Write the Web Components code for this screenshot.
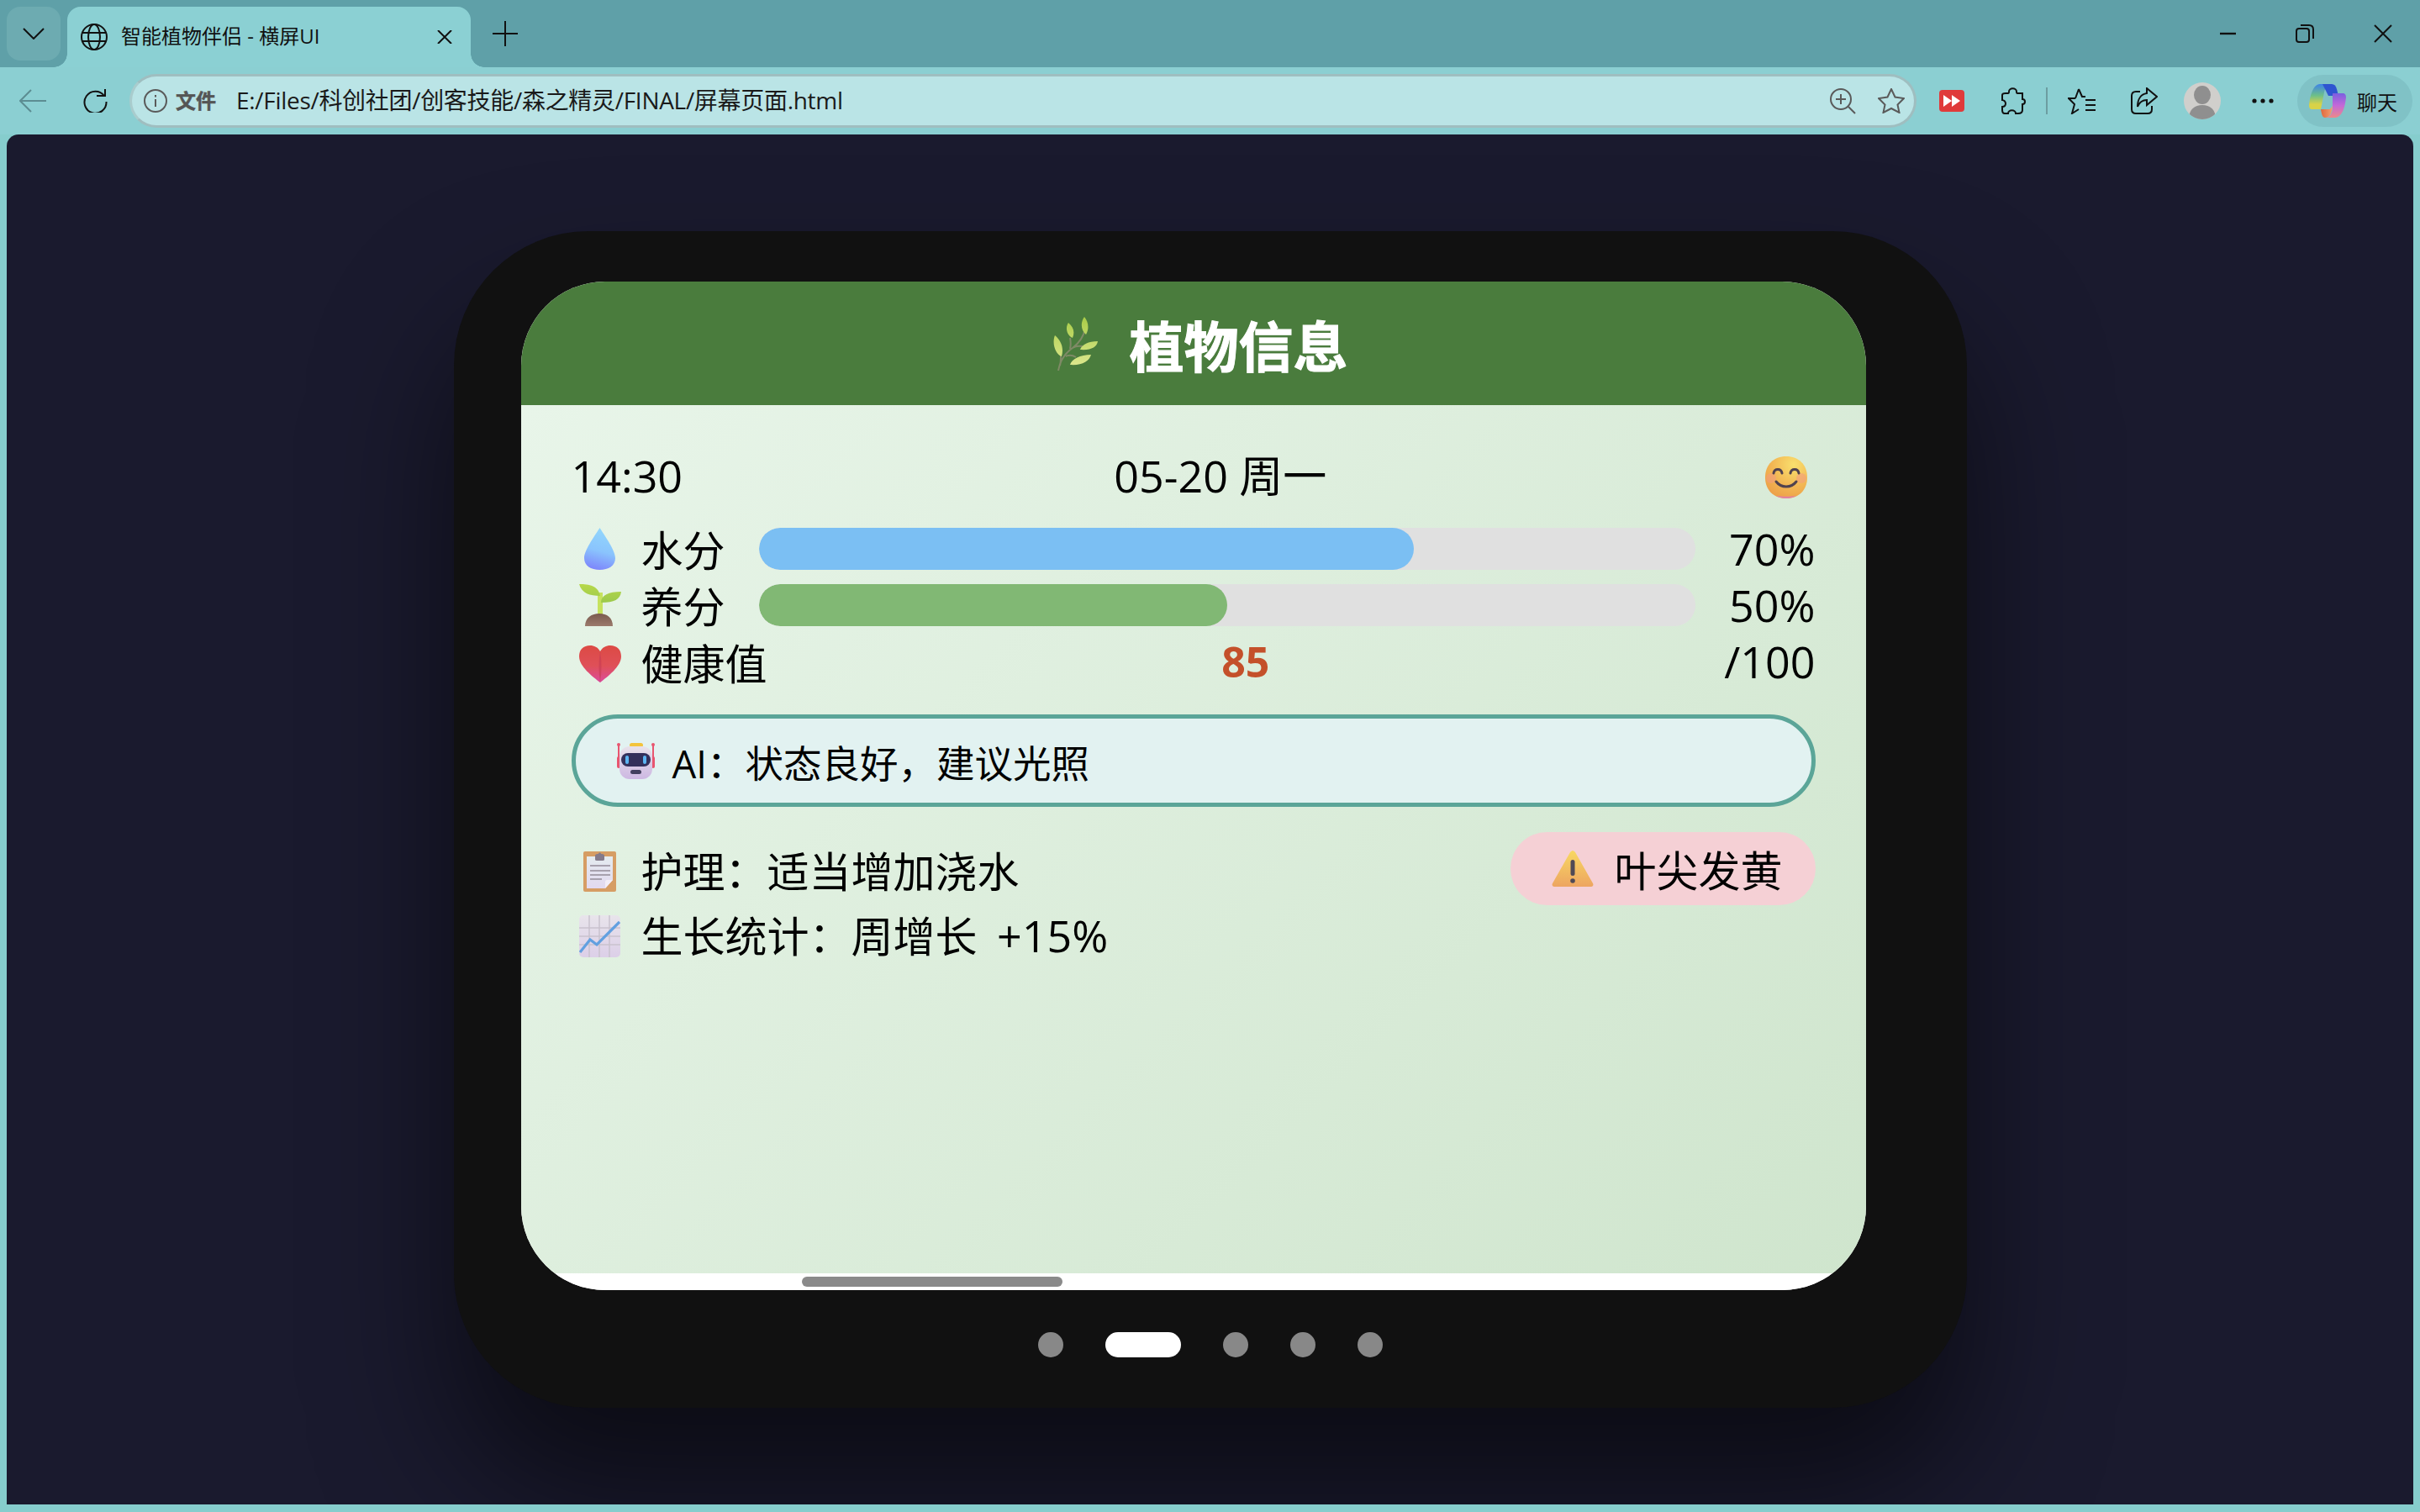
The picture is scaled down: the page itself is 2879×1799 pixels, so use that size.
<!DOCTYPE html>
<html lang="zh">
<head>
<meta charset="utf-8">
<title>智能植物伴侣 - 横屏UI</title>
<style>
  html, body { margin: 0; padding: 0; width: 2879px; height: 1799px; overflow: hidden; background: #86cdcd; }
  body { display: flex; flex-direction: column; font-family: "Open Sans", "Noto Sans CJK SC", sans-serif; }
</style>
</head>
<body>
<tab-strip></tab-strip>
<tool-bar></tool-bar>
<page-view>
  <device-frame>
    <plant-screen></plant-screen>
  </device-frame>
</page-view>

<script>
const ICONS = {
  herb: `<svg viewBox="0 0 54 64"><defs><linearGradient id="h" x1="0" y1="0" x2="0" y2="1"><stop offset="0" stop-color="#a9cc48"/><stop offset="1" stop-color="#dbe68c"/></linearGradient></defs>
    <path d="M7 64C9 52 14 44 24 37 32 31 37 24 39 14M24 37c3-2 6-3 12-2M16 47c4-2 7-2 12 1M21 38c1-4 1-8 0-13M9 58c1-4 1-8 1-13" fill="none" stroke="#7f8a66" stroke-width="2"/>
    <path d="M3 22C10 28 14 36 11 47 4 45-1 32 3 22zM19 7C25 12 27 18 24 25 17 22 15 13 19 7zM38 0C43 6 44 14 40 21 34 16 33 7 38 0zM54 29C53 36 46 40 33 39 35 33 43 29 54 29zM46 45C44 53 35 58 21 57 23 50 33 45 46 45z" fill="url(#h)"/></svg>`,
  smile: `<svg viewBox="0 0 50 50"><defs><radialGradient id="s" cx=".68" cy=".2" r=".95"><stop offset="0" stop-color="#f9e06e"/><stop offset=".55" stop-color="#f2b653"/><stop offset="1" stop-color="#eb9a45"/></radialGradient></defs>
    <path d="M25 0C40 0 50 10 50 25S40 50 25 50 0 40 0 25 10 0 25 0z" fill="url(#s)"/><path d="M13 47c7 4 17 4 24 0-7 1-17 1-24 0z" fill="#e27fa5"/>
    <circle cx="7" cy="26" r="6" fill="#f29a82" opacity=".55"/><circle cx="43" cy="26" r="6" fill="#f29a82" opacity=".55"/>
    <path d="M10 20c1-6 9-6 10 0M30 20c1-6 9-6 10 0M13 30c6 8 18 8 24 0" fill="none" stroke="#50424f" stroke-width="3" stroke-linecap="round"/></svg>`,
  drop: `<svg viewBox="0 0 37 50"><defs><linearGradient id="d" x1=".6" y1="0" x2=".4" y2="1"><stop offset="0" stop-color="#92d7fc"/><stop offset=".55" stop-color="#8ac4fd"/><stop offset="1" stop-color="#7d86fb"/></linearGradient></defs>
    <path d="M18.500 0C22 6 37 26 37 36 37 45 29 50 18.500 50S0 45 0 36C0 26 15 6 18.500 0z" fill="url(#d)"/></svg>`,
  sprout: `<svg viewBox="0 0 50 50"><defs><linearGradient id="sp" x1="0" y1="0" x2="0" y2="1"><stop offset="0" stop-color="#b7d84a"/><stop offset="1" stop-color="#9bc94c"/></linearGradient><linearGradient id="so" x1="0" y1="0" x2="0" y2="1"><stop offset="0" stop-color="#7a5a4e"/><stop offset="1" stop-color="#9b7a6c"/></linearGradient></defs>
    <path d="M22 10h6v27h-6z" fill="#c6e25e"/><path d="M0 0C12 0 23 2 25 14 13 14 3 11 0 0zM50 9C49 18 42 22 26 22 26 13 35 9 50 9z" fill="url(#sp)"/>
    <path d="M24 35c9 0 16 5 16 15H7c0-10 8-15 17-15z" fill="url(#so)"/></svg>`,
  heart: `<svg viewBox="0 0 50 44"><defs><linearGradient id="he" x1="0" y1="0" x2="0" y2="1"><stop offset="0" stop-color="#dc4a44"/><stop offset=".55" stop-color="#df5058"/><stop offset="1" stop-color="#dc4a9c"/></linearGradient></defs>
    <path d="M25 7C28 2 32 0 37 0 45 0 50 5 50 13 50 25 34 37 25 44 16 37 0 25 0 13 0 5 5 0 13 0 18 0 22 2 25 7z" fill="url(#he)"/><path d="M25 7c-2 12-2 24 0 37 2-13 2-25 0-37z" fill="#c73b52" opacity=".6"/></svg>`,
  robot: `<svg viewBox="0 0 45 44"><defs><linearGradient id="r" x1="0" y1="0" x2="0" y2="1"><stop offset="0" stop-color="#e8e2ea"/><stop offset="1" stop-color="#cdb8e2"/></linearGradient></defs>
    <rect x="15" y="1" width="16" height="5" rx="2.500" fill="#f3c43c"/><path d="M2 3v26M43 3v26" stroke="#e8556f" stroke-width="2"/><circle cx="2" cy="3" r="2" fill="#e8556f"/><circle cx="43" cy="3" r="2" fill="#e8556f"/>
    <rect x="0" y="17" width="4" height="14" rx="2" fill="#e8556f"/><rect x="41" y="17" width="4" height="14" rx="2" fill="#e8556f"/>
    <rect x="3" y="5" width="39" height="39" rx="12" fill="url(#r)"/><rect x="5" y="13" width="35" height="16" rx="8" fill="#33305a"/><rect x="10" y="16" width="4" height="10" rx="2" fill="#5cb5f2"/><rect x="31" y="16" width="4" height="10" rx="2" fill="#5cb5f2"/><rect x="16" y="33" width="13" height="5" rx="2.500" fill="#43405f"/></svg>`,
  clipboard: `<svg viewBox="0 0 39 49"><defs><linearGradient id="c" x1="0" y1="0" x2="0" y2="1"><stop offset="0" stop-color="#e4ebef"/><stop offset="1" stop-color="#e2d9f0"/></linearGradient></defs>
    <rect x="0" y="1" width="39" height="48" rx="2" fill="#d69d64"/><path d="M4 7h31v28l-9 10H4z" fill="url(#c)"/><path d="M26 45l9-10h-7c-1 0-2 1-2 2z" fill="#f3eef7"/>
    <path d="M14 6c0-1 1-2 3-2h1c0-2 3-2 3 0h1c2 0 3 1 3 2v4c0 1 0 2-2 2H16c-2 0-2-1-2-2z" fill="#847a8a"/><path d="M8 18h24M8 24h24M8 29h24M8 34h14" stroke="#a7a1ae" stroke-width="1.800"/></svg>`,
  chart: `<svg viewBox="0 0 49 50"><defs><linearGradient id="g" x1="0" y1="0" x2="0" y2="1"><stop offset="0" stop-color="#e8e4eb"/><stop offset="1" stop-color="#dccfe8"/></linearGradient></defs>
    <rect width="49" height="50" rx="5" fill="url(#g)"/><path d="M0 15h49M0 25h49M0 35h49M12 0v50M24 0v50M36 0v50" stroke="#c9c2ce" stroke-width="1.500"/>
    <path d="M1 44L13 29l8 6L48 8" fill="none" stroke="#62a0e0" stroke-width="3.200"/></svg>`,
  warn: `<svg viewBox="0 0 50 43"><defs><linearGradient id="w" x1="0" y1="0" x2="0" y2="1"><stop offset="0" stop-color="#f8d862"/><stop offset="1" stop-color="#eda561"/></linearGradient></defs>
    <path d="M25 0c1 0 2 1 3 2l21 37c1 2 0 4-2 4H3c-2 0-3-2-2-4L22 2c1-1 2-2 3-2z" fill="url(#w)"/><rect x="22.500" y="11" width="5" height="19" rx="2.500" fill="#4f4a55"/><circle cx="25" cy="36" r="2.800" fill="#4f4a55"/></svg>`
};

// one painted emoji, size comes from the attributes
class UiIcon extends HTMLElement {
  connectedCallback() {
    this.attachShadow({ mode: 'open' });
    const w = this.getAttribute('w') || 50, h = this.getAttribute('h') || 50;
    this.shadowRoot.innerHTML = `
      <style>
        :host { display: inline-flex; align-items: center; justify-content: center; flex: none; }
        svg { display: block; width: ${w}px; height: ${h}px; }
      </style>
      ${ICONS[this.getAttribute('name')]}
    `;
  }
}
customElements.define('ui-icon', UiIcon);

class TabStrip extends HTMLElement {
  connectedCallback() {
    this.attachShadow({ mode: 'open' });
    this.shadowRoot.innerHTML = `
      <style>
        :host { display: flex; height: 80px; background: #5fa0a8; color: #111; font-size: 24px; flex: none; }
        .list { width: 64px; height: 64px; margin: 8px 8px 0; border-radius: 16px; background: #6dabb1; display: flex; align-items: center; justify-content: center; }
        .tab { position: relative; width: 480px; height: 72px; margin-top: 8px; background: #8bd0d3; border-radius: 16px 16px 0 0; display: flex; align-items: center; padding: 0 22px 0 16px; box-sizing: border-box; }
        .tab::before, .tab::after { content: ''; position: absolute; bottom: 0; width: 16px; height: 16px; }
        .tab::before { left: -16px; background: radial-gradient(circle at 0 0, transparent 15.500px, #8bd0d3 16px); }
        .tab::after { right: -16px; background: radial-gradient(circle at 100% 0, transparent 15.500px, #8bd0d3 16px); }
        .title { margin-left: 16px; flex: 1; white-space: nowrap; position: relative; top: -3px; }
        .plus { margin-left: 26px; display: flex; align-items: center; }
        .controls { margin-left: auto; display: flex; align-items: center; }
        svg { display: block; fill: none; stroke: #111; stroke-width: 2; }
      </style>
      <div class="list"><svg width="26" height="14" viewBox="0 0 26 14"><path d="M1 1l12 12L25 1"/></svg></div>
      <div class="tab">
        <svg width="32" height="32" viewBox="0 0 32 32"><circle cx="16" cy="16" r="15"/><ellipse cx="16" cy="16" rx="7" ry="15"/><path d="M2 11h28M2 21h28"/></svg>
        <span class="title">智能植物伴侣 - 横屏UI</span>
        <svg width="18" height="16" viewBox="0 0 18 16"><path d="M1 0l16 16M17 0L1 16"/></svg>
      </div>
      <div class="plus"><svg width="30" height="30" viewBox="0 0 30 30"><path d="M15 0v30M0 15h30"/></svg></div>
      <div class="controls">
        <svg width="20" height="20" viewBox="0 0 20 20"><path d="M0 10h19" stroke-width="2.400"/></svg>
        <svg style="margin-left:70px" width="22" height="22" viewBox="0 0 22 22"><rect x="1" y="5" width="15" height="16" rx="3"/><path d="M6 1h10c3 0 5 2 5 5v11"/></svg>
        <svg style="margin-left:71px;margin-right:33px" width="22" height="22" viewBox="0 0 22 22"><path d="M1 1l20 20M21 1L1 21"/></svg>
      </div>
    `;
  }
}
customElements.define('tab-strip', TabStrip);

class ToolBar extends HTMLElement {
  connectedCallback() {
    this.attachShadow({ mode: 'open' });
    this.shadowRoot.innerHTML = `
      <style>
        :host { display: flex; align-items: center; height: 80px; background: #8bcfd2; flex: none; color: #111; font-size: 24px; }
        svg { display: block; fill: none; stroke: #111; stroke-width: 2; flex: none; }
        .nav { display: flex; align-items: center; width: 154px; padding-left: 23px; box-sizing: border-box; gap: 42px; }
        .addr { width: 2126px; height: 64px; box-sizing: border-box; border: 3px solid #9fbec0; border-left-color: #a9cccd; border-radius: 32px; background: #bae4e6; display: flex; align-items: center; padding-left: 14px; }
        .scheme { margin-left: 10px; font-weight: 700; color: #555; font-size: 24px; width: 72px; -webkit-text-stroke: .5px #555; position: relative; top: -2px; }
        .url { font-size: 28px; white-space: nowrap; color: #1a1a1a; position: relative; top: -2px; letter-spacing: -0.3px; }
        .right { display: flex; align-items: center; margin-left: 27px; }
        .ext { width: 30px; height: 26px; border-radius: 4px; background: #e03b3b; display: flex; align-items: center; justify-content: center; }
        .sep { width: 2px; height: 32px; background: #6c9da1; margin: 0 24px; }
        .avatar { width: 44px; height: 44px; border-radius: 50%; background: #d0cfcc; overflow: hidden; }
        .chat { width: 137px; height: 62px; border-radius: 31px; background: #80c2c6; display: flex; align-items: center; padding-left: 14px; box-sizing: border-box; margin-left: 28px; gap: 13px; white-space: nowrap; }
      </style>
      <div class="nav">
        <svg width="33" height="28" viewBox="0 0 33 28" style="stroke:#5c8d92"><path d="M32 14H2M14 1L1 14l13 13"/></svg>
        <svg width="30" height="28" viewBox="0 0 30 28"><path d="M26 8A13 13 0 1 0 28.500 15M27 0v8H17"/></svg>
      </div>
      <div class="addr">
        <svg width="28" height="28" viewBox="0 0 28 28" style="stroke:#5a5a5a"><circle cx="14" cy="14" r="13"/><path d="M14 12v9M14 7v2.500"/></svg>
        <span class="scheme">文件</span>
        <span class="url">E:/Files/科创社团/创客技能/森之精灵/FINAL/屏幕页面.html</span>
        <span style="margin-left:auto;display:flex;align-items:center;gap:26px;padding-right:11px">
          <svg width="31" height="31" viewBox="0 0 31 31" style="stroke:#5a5a5a"><circle cx="13" cy="13" r="12"/><path d="M13 7v12M7 13h12M22 22l8 8"/></svg>
          <svg width="32" height="30" viewBox="0 0 32 30" style="stroke:#5a5a5a"><path d="M16 1l4.500 9.500L31 12l-7.500 7.500L25.500 29 16 24l-9.500 5 2-9.500L1 12l10.500-1.500z"/></svg>
        </span>
      </div>
      <div class="right">
        <div class="ext"><svg width="20" height="14" viewBox="0 0 20 14" style="stroke:none;fill:#fff"><path d="M0 0l10 7-10 7zM10 0l10 7-10 7z"/></svg></div>
        <svg style="margin-left:43px" width="30" height="32" viewBox="0 0 30 32"><path d="M10 5c0-5 9-5 9 0 0 1 0 2 1 2h6v7c2 0 3 1 3 3s-1 3-3 3v7c0 3-2 4-5 4h-3c0-5-9-5-9 0H5c-2 0-3-2-3-4v-4c3 0 4-2 4-4s-2-4-4-4V9c0-2 2-2 4-2h3c1 0 1-1 1-2z"/></svg>
        <div class="sep"></div>
        <svg width="34" height="31" viewBox="0 0 34 31"><path d="M13 1l4 9h4M9 12H1l7 7-3 11 8-5M21 14h12M21 20h12M21 26h12M13 1L9 12"/></svg>
        <svg style="margin-left:40px" width="33" height="32" viewBox="0 0 33 32"><path d="M12 5H7C3 5 2 7 2 10v16c0 3 2 5 5 5h14c3 0 5-2 5-5v-4M20 1l12 10-12 10v-6c-6 0-9 3-11 8 0-9 4-15 11-16z"/></svg>
        <div class="avatar" style="margin-left:31px"><svg width="44" height="44" viewBox="0 0 44 44" style="stroke:none;fill:#8f8f8f"><ellipse cx="22" cy="15" rx="10" ry="11"/><path d="M6 44c0-12 7-17 16-17s16 5 16 17z"/></svg></div>
        <svg style="margin-left:37px" width="26" height="6" viewBox="0 0 26 6"><g style="stroke:none;fill:#111"><circle cx="3" cy="3" r="2.600"/><circle cx="13" cy="3" r="2.600"/><circle cx="23" cy="3" r="2.600"/></g></svg>
        <div class="chat">
          <svg width="44" height="40" viewBox="0 0 44 40" style="stroke:none"><defs>
            <linearGradient id="cl" x1="0" y1="0" x2="0" y2="1"><stop offset="0" stop-color="#3e82e8"/><stop offset=".45" stop-color="#6cbf8a"/><stop offset=".8" stop-color="#d8d248"/></linearGradient>
            <linearGradient id="cr" x1="0" y1="0" x2="0" y2="1"><stop offset="0" stop-color="#7a5fe0"/><stop offset=".5" stop-color="#c468d8"/><stop offset="1" stop-color="#ec8a88"/></linearGradient>
            <linearGradient id="cb" x1="0" y1="0" x2="1" y2="0"><stop offset="0" stop-color="#e0683c"/><stop offset="1" stop-color="#f4a070"/></linearGradient></defs>
            <path d="M13 0h14c-5 0-8 4-9 10l-4 20H4c-3 0-4-2-4-5C1 16 3 8 7 3c2-2 4-3 6-3z" fill="url(#cl)"/><path d="M16 0h11c3 0 5 2 6 6l2 8-12 0z" fill="#2f55d0"/>
            <path d="M28 11h12c3 0 4 2 4 5-1 9-3 17-7 21-2 2-4 3-6 3-4 0-9 0-12 0 5 0 8-4 9-10z" fill="url(#cr)"/><path d="M14 30h11l3-4c-1 9-4 14-9 14-3 0-4-4-5-10z" fill="url(#cb)"/></svg>
          <span>聊天</span>
        </div>
      </div>
    `;
  }
}
customElements.define('tool-bar', ToolBar);

class PageView extends HTMLElement {
  connectedCallback() {
    this.attachShadow({ mode: 'open' });
    this.shadowRoot.innerHTML = `
      <style>
        :host { display: flex; justify-content: center; width: 2863px; height: 1630px; margin: 0 8px; padding-top: 115px; box-sizing: border-box; background: #1a1a2e; border-radius: 14px 14px 0 0; overflow: hidden; }
      </style>
      <slot></slot>
    `;
  }
}
customElements.define('page-view', PageView);

class DeviceFrame extends HTMLElement {
  connectedCallback() {
    this.attachShadow({ mode: 'open' });
    this.shadowRoot.innerHTML = `
      <style>
        :host { display: flex; flex-direction: column; align-items: center; width: 1800px; height: 1400px; padding-top: 60px; box-sizing: border-box; background: #111; border-radius: 160px; box-shadow: 0 100px 160px rgba(0,0,0,.55); flex: none; }
        ::slotted(plant-screen) { margin-right: 40px; }
        .dots { display: flex; gap: 50px; margin-top: 50px; }
        .dots i { width: 30px; height: 30px; border-radius: 50%; background: #888; }
        .dots i.on { width: 90px; border-radius: 15px; background: #fff; }
      </style>
      <slot></slot>
      <div class="dots"><i></i><i class="on"></i><i></i><i></i><i></i></div>
    `;
  }
}
customElements.define('device-frame', DeviceFrame);

class MeterRow extends HTMLElement {
  connectedCallback() {
    this.attachShadow({ mode: 'open' });
    const pct = this.getAttribute('value');
    this.shadowRoot.innerHTML = `
      <style>
        :host { display: grid; grid-template-columns: 68px 155px 1fr 143px; align-items: center; height: 50px; }
        .name { padding-left: 15px; white-space: nowrap; position: relative; top: 2px; }
        .track { height: 50px; border-radius: 25px; background: #e0e0e0; overflow: hidden; }
        .fill { height: 100%; width: ${pct}%; border-radius: 25px; background: ${this.getAttribute('color')}; }
        .val { text-align: right; font-size: 52px; }
      </style>
      <slot name="icon"></slot>
      <span class="name"><slot></slot></span>
      <div class="track"><div class="fill"></div></div>
      <span class="val">${pct}%</span>
    `;
  }
}
customElements.define('meter-row', MeterRow);

class PlantScreen extends HTMLElement {
  connectedCallback() {
    this.attachShadow({ mode: 'open' });
    this.shadowRoot.innerHTML = `
      <style>
        :host { display: flex; flex-direction: column; width: 1600px; height: 1200px; border-radius: 100px; overflow: hidden; background: #fff; flex: none; color: #000; font-size: 50px; line-height: 50px; }
        header { height: 147px; flex: none; background: #4a7c3d; color: #fff; display: flex; align-items: center; justify-content: center; font-size: 65px; font-weight: 700; gap: 20px; -webkit-text-stroke: 1px #fff; }
        header ui-icon { width: 86px; }
        header span { position: relative; top: 3px; left: 1px; }
        .body { flex: 1; padding: 46px 60px 0; background: linear-gradient(135deg, #e8f5e9, #cfe5cd); display: flex; flex-direction: column; }
        .n { font-size: 52px; }
        .status { display: flex; justify-content: space-between; align-items: center; height: 76px; margin-bottom: 24px; }
        .status ui-icon { width: 68px; margin-top: 4px; }
        .meters { display: flex; flex-direction: column; gap: 17px; }
        .health { display: flex; justify-content: space-between; align-items: center; height: 50px; }
        .health .lab { display: flex; align-items: center; position: relative; top: 3px; }
        .health .lab ui-icon { width: 68px; }
        .health .lab span { padding-left: 15px; }
        .score { color: #c4502a; font-weight: 700; }
        .ai { display: flex; align-items: center; height: 110px; box-sizing: border-box; margin-top: 38px; padding-left: 49px; border: 5px solid #5ba598; border-radius: 55px; background: #e2f2f1; font-size: 45.500px; }
        .ai span { margin-left: 21px; position: relative; top: 3px; }
        .lower { display: flex; justify-content: space-between; align-items: flex-start; margin-top: 30px; }
        .lines { padding-top: 8px; }
        .line { display: flex; align-items: center; height: 77px; white-space: nowrap; }
        .line ui-icon { width: 68px; margin-right: 15px; }
        .line .n { margin-left: 10px; }
        .badge { display: flex; align-items: center; height: 87px; width: 363px; box-sizing: border-box; padding-left: 49px; border-radius: 44px; background: #f5d0d5; }
        .badge span { margin-left: 25px; white-space: nowrap; position: relative; top: 2px; }
        .bar { height: 20px; flex: none; background: #fff; }
        .thumb { width: 310px; height: 12px; margin: 4px 0 0 334px; border-radius: 6px; background: #8a8a8a; }
      </style>
      <header><ui-icon name="herb" w="54" h="64"></ui-icon><span>植物信息</span></header>
      <div class="body">
        <div class="status">
          <span class="n">14:30</span>
          <span class="n">05-20 周一</span>
          <ui-icon name="smile"></ui-icon>
        </div>
        <div class="meters">
          <meter-row value="70" color="#7bbff3"><ui-icon slot="icon" name="drop" w="37" h="50"></ui-icon>水分</meter-row>
          <meter-row value="50" color="#81b874"><ui-icon slot="icon" name="sprout"></ui-icon>养分</meter-row>
          <div class="health">
            <div class="lab"><ui-icon name="heart" w="50" h="44"></ui-icon><span>健康值</span></div>
            <b class="score">85</b>
            <span class="n">/100</span>
          </div>
        </div>
        <div class="ai"><ui-icon name="robot" w="45" h="44"></ui-icon><span>AI：状态良好，建议光照</span></div>
        <div class="lower">
          <div class="lines">
            <div class="line"><ui-icon name="clipboard" w="39" h="49"></ui-icon>护理：适当增加浇水</div>
            <div class="line"><ui-icon name="chart" w="49" h="50"></ui-icon><span>生长统计：周增长<span class="n"> +15%</span></span></div>
          </div>
          <div class="badge"><ui-icon name="warn" w="50" h="43"></ui-icon><span>叶尖发黄</span></div>
        </div>
      </div>
      <div class="bar"><div class="thumb"></div></div>
    `;
  }
}
customElements.define('plant-screen', PlantScreen);
</script>
</body>
</html>
